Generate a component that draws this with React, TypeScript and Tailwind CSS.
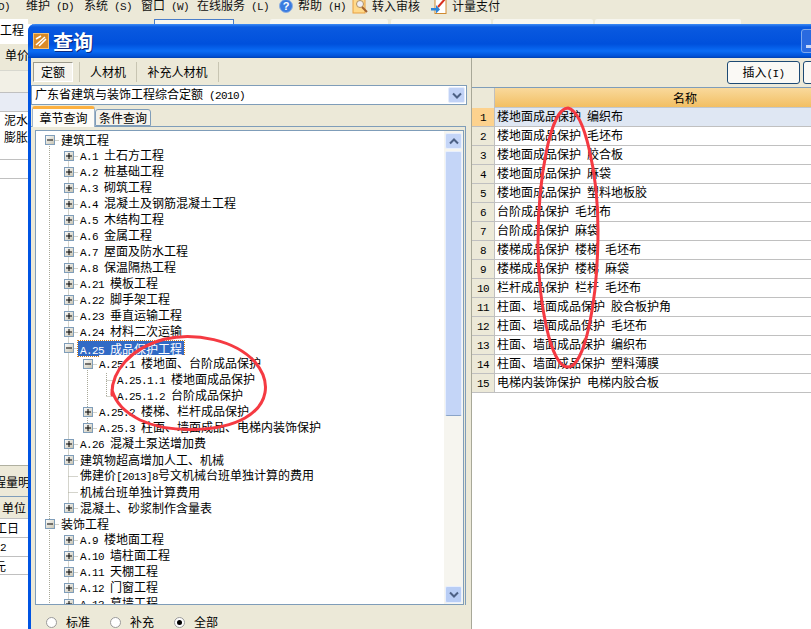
import React from "react";

const cjk = "font-['Noto_Sans_CJK_SC','Noto_Sans_CJK_JP',sans-serif]";

function T({ children, className = "" }: { children: string; className?: string }) {
  const parts = children.split(/([\x20-\x7e]+)/).filter(Boolean);
  return (
    <span className={`whitespace-pre ${className}`}>
      {parts.map((p, i) =>
        /^[\x20-\x7e]+$/.test(p) ? (
          <span key={i} className="font-['Liberation_Mono',monospace] text-[11px] tracking-[-0.6px]">{p}</span>
        ) : (
          <span key={i}>{p}</span>
        )
      )}
    </span>
  );
}

function Box({ open }: { open?: boolean }) {
  return (
    <svg width="10" height="10" viewBox="0 0 10 10" className="block shrink-0">
      <defs>
        <linearGradient id="bx" x1="0" y1="0" x2="1" y2="1">
          <stop offset="0" stopColor="#ffffff" />
          <stop offset="1" stopColor="#c4c0ae" />
        </linearGradient>
      </defs>
      <rect x="0.5" y="0.5" width="9" height="9" fill="url(#bx)" stroke="#7f9db9" />
      <path d={open ? "M2 5h6" : "M2 5h6M5 2v6"} stroke="#000" strokeWidth="1" />
    </svg>
  );
}

type Row = { t: string; l: number; s?: "p" | "m"; sel?: boolean };
const tree: Row[] = [
  { t: "建筑工程", l: 0, s: "m" },
  { t: "A.1 土石方工程", l: 1, s: "p" },
  { t: "A.2 桩基础工程", l: 1, s: "p" },
  { t: "A.3 砌筑工程", l: 1, s: "p" },
  { t: "A.4 混凝土及钢筋混凝土工程", l: 1, s: "p" },
  { t: "A.5 木结构工程", l: 1, s: "p" },
  { t: "A.6 金属工程", l: 1, s: "p" },
  { t: "A.7 屋面及防水工程", l: 1, s: "p" },
  { t: "A.8 保温隔热工程", l: 1, s: "p" },
  { t: "A.21 模板工程", l: 1, s: "p" },
  { t: "A.22 脚手架工程", l: 1, s: "p" },
  { t: "A.23 垂直运输工程", l: 1, s: "p" },
  { t: "A.24 材料二次运输", l: 1, s: "p" },
  { t: "A.25 成品保护工程", l: 1, s: "m", sel: true },
  { t: "A.25.1 楼地面、台阶成品保护", l: 2, s: "m" },
  { t: "A.25.1.1 楼地面成品保护", l: 3 },
  { t: "A.25.1.2 台阶成品保护", l: 3 },
  { t: "A.25.2 楼梯、栏杆成品保护", l: 2, s: "p" },
  { t: "A.25.3 柱面、墙面成品、电梯内装饰保护", l: 2, s: "p" },
  { t: "A.26 混凝土泵送增加费", l: 1, s: "p" },
  { t: "建筑物超高增加人工、机械", l: 1, s: "p" },
  { t: "佛建价[2013]8号文机械台班单独计算的费用", l: 1 },
  { t: "机械台班单独计算费用", l: 1 },
  { t: "混凝土、砂浆制作含量表", l: 1, s: "p" },
  { t: "装饰工程", l: 0, s: "m" },
  { t: "A.9 楼地面工程", l: 1, s: "p" },
  { t: "A.10 墙柱面工程", l: 1, s: "p" },
  { t: "A.11 天棚工程", l: 1, s: "p" },
  { t: "A.12 门窗工程", l: 1, s: "p" },
  { t: "A.13 幕墙工程", l: 1, s: "p" },
];

const rows = [
  "楼地面成品保护 编织布",
  "楼地面成品保护 毛坯布",
  "楼地面成品保护 胶合板",
  "楼地面成品保护 麻袋",
  "楼地面成品保护 塑料地板胶",
  "台阶成品保护 毛坯布",
  "台阶成品保护 麻袋",
  "楼梯成品保护 楼梯 毛坯布",
  "楼梯成品保护 楼梯 麻袋",
  "栏杆成品保护 栏杆 毛坯布",
  "柱面、墙面成品保护 胶合板护角",
  "柱面、墙面成品保护 毛坯布",
  "柱面、墙面成品保护 编织布",
  "柱面、墙面成品保护 塑料薄膜",
  "电梯内装饰保护 电梯内胶合板",
];

const padBox = ["pl-[9px]", "pl-[28px]", "pl-[47px]", "pl-[47px]"];
const padText = ["pl-[24px]", "pl-[44px]", "pl-[63px]", "pl-[81px]"];

const cy = (i: number) => 9 + 16 * i + 0.5;
const guideLines = tree
  .map((r, i) => {
    const from = [13.5, 32.5, 51.5, 70.5][r.l];
    const to = [23, 42, 61, 80][r.l];
    return `M${from} ${cy(i)}H${to}`;
  })
  .join("");

function Radio({ on, label }: { on?: boolean; label: string }) {
  return (
    <div className="flex items-center gap-[9px]">
      <span className="w-[11px] h-[11px] rounded-full border border-[#9a9a9a] bg-white flex items-center justify-center">
        {on && <span className="w-[5px] h-[5px] rounded-full bg-black" />}
      </span>
      <span>{label}</span>
    </div>
  );
}

function Chev({ up }: { up?: boolean }) {
  return (
    <svg width="10" height="7" viewBox="0 0 10 7">
      <path d={up ? "M1 5.5L5 1.5L9 5.5" : "M1 1.5L5 5.5L9 1.5"} fill="none" stroke="#4d6185" strokeWidth="2" />
    </svg>
  );
}

export default function App() {
  return (
    <div className={`relative w-[811px] h-[629px] overflow-hidden bg-white text-[12px] leading-[16px] text-black ${cjk}`}>
      {/* menu bar */}
      <div className="h-[19px] bg-[#ece9d8] text-[#111] pb-[8px]">
        <div className="h-[11px] flex items-center">
          <T className="ml-[-2px] w-[28px]">{"D)"}</T>
          <T className="w-[58px]">{"维护 (D)"}</T>
          <T className="w-[57px]">{"系统 (S)"}</T>
          <T className="w-[56px]">{"窗口 (W)"}</T>
          <T className="w-[82px]">{"在线服务 (L)"}</T>
          <svg width="14" height="14" viewBox="0 0 14 14" className="mr-[5px]">
            <circle cx="7" cy="7" r="6.5" fill="#3a7be0" stroke="#8fb0e0" />
            <text x="7" y="11" textAnchor="middle" fontSize="11" fontWeight="700" fill="#fff" fontFamily="Liberation Sans">?</text>
          </svg>
          <T className="w-[54px]">{"帮助 (H)"}</T>
          <svg width="16" height="16" viewBox="0 0 16 16" className="mr-[4px]">
            <rect x="1" y="0" width="12" height="15" fill="#ffd98a" stroke="#e8a040" />
            <circle cx="8" cy="6" r="3.5" fill="#eeeef4" stroke="#b09060" />
            <path d="M10 9l5 5" stroke="#a06030" strokeWidth="2" />
          </svg>
          <T className="w-[59px]">转入审核</T>
          <svg width="17" height="16" viewBox="0 0 17 16" className="mr-[4px]">
            <rect x="4" y="0.5" width="11" height="15" fill="#fff" stroke="#d08a30" />
            <path d="M7 9l7-8" stroke="#d83020" strokeWidth="2" />
            <path d="M0 10h5V7l4 4.5-4 4v-3H0z" fill="#2f86d8" />
          </svg>
          <T>计量支付</T>
        </div>
      </div>
      {/* background tab strip */}
      <div className="h-[5px] bg-[#ece9d8] flex items-end">
        <div className="w-[28px] h-[5px] bg-white" />
        <div className="ml-[126px] w-[80px] h-[5px] bg-[#f7f6ef] border border-b-0 border-[#4a7dc8]" />
        <div className="ml-[36px] w-[118px] h-[5px] bg-[#f7f6ef] rounded-t-[2px]" />
        <div className="ml-[3px] w-[100px] h-[5px] bg-[#f7f6ef] rounded-t-[2px]" />
        <div className="ml-[2px] w-[100px] h-[5px] bg-[#f7f6ef] rounded-t-[2px]" />
        <div className="ml-[2px] w-[146px] h-[5px] bg-[#f7f6ef] rounded-t-[2px]" />
      </div>
      {/* background window, left part */}
      <div className="w-[28px] flex flex-col -mt-[5px]">
        <div className="h-[25px] bg-white pt-[3px] overflow-hidden"><T className="block">工程</T></div>
        <div className="h-[26px] bg-[#ece9d8] flex items-center pl-[5px] pb-[4px] overflow-hidden"><T>单价</T></div>
        <div className="h-[22px] bg-[#f2f0e6] border-t border-[#d8d8d0]" />
        <div className="h-[19px] bg-[#e8ecf5] border-t border-[#c0c0c0]" />
        <div className="h-[17px] bg-white border-t border-[#c0c0c0] flex items-center justify-end"><T>泥水</T></div>
        <div className="h-[31px] bg-white flex items-start justify-end pt-[1px]"><T>膨胀</T></div>
        <div className="h-[19px] bg-white border-t border-[#c0c0c0]" />
        <div className="h-[287px] bg-white border-t border-[#c0c0c0]" />
        <div className="h-[31px] bg-[#ece9d8] border-t border-[#b0b0a0] overflow-hidden pt-[8px]"><T className="ml-[-6px] block">程量明</T></div>
        <div className="h-[22px] bg-[#ece9d8] border-t border-[#7f9db9] flex items-center pl-[2px]"><T>单位</T></div>
        <div className="h-[19px] bg-white border-t border-[#c0c0c0] flex items-center overflow-hidden"><T className="ml-[-5px]">工日</T></div>
        <div className="h-[19px] bg-white border-t border-[#c0c0c0] flex items-center"><T>2</T></div>
        <div className="h-[18px] bg-white border-t border-[#c0c0c0] flex items-center overflow-hidden"><T className="ml-[-6px]">元</T></div>
        <div className="h-[20px] bg-white border-t border-[#c0c0c0]" />
      </div>

      {/* dialog window */}
      <div className="absolute left-[28px] top-[24px] w-[800px] h-[620px] flex flex-col bg-[#ece9d8] border-x-[3px] border-[#0054e3] rounded-tl-[7px]">
        <div className="h-[34px] -mx-[3px] shrink-0 flex items-center pl-[5px] gap-[4px] rounded-tl-[7px] bg-[linear-gradient(to_bottom,#3d8cf5_0px,#0a5ae0_3px,#0050dc_20px,#0a6cf5_27px,#0052d8_32px,#0040b0_34px)]">
          <svg width="16" height="16" viewBox="0 0 16 16" className="shrink-0">
            <rect x="0.5" y="0.5" width="15" height="15" fill="#d98a28" stroke="#f5c070" />
            <path d="M3 12L12 4M6 13l7-7M3 6l5-3" stroke="#fff" strokeWidth="1.6" />
          </svg>
          <span className="text-white font-bold text-[20px] leading-[24px] mt-[1px] [text-shadow:1px_1px_0_#0a2a80]">查询</span>
          <div className="ml-auto w-[27px] h-[24px] rounded-[3px] border border-[#7fa8ec] bg-[#2a6ae0]">
            <span className="block w-[10px] h-[3px] bg-[#c8d8f8] mt-[15px] ml-[4px]" />
          </div>
        </div>
        <div className="flex-1 flex min-h-0">
          {/* left pane */}
          <div className="w-[436px] shrink-0 flex flex-col">
            <div className="h-[27px] shrink-0 flex items-center pl-[2px]">
              <div className="w-[40px] h-[20px] flex items-center justify-center bg-[#f5f3ec] border border-[#9c9a8c] border-b-white border-r-white">定额</div>
              <span className="ml-[6px] w-[58px] h-[20px] flex items-center justify-center border-x border-[#c8c5b2] pr-[10px] pl-[10px]">人材机</span>
              <span className="w-[82px] h-[20px] flex items-center justify-center border-r border-[#c8c5b2]">补充人材机</span>
            </div>
            <div className="h-[20px] shrink-0 bg-white border border-[#7f9db9] flex items-center pl-[3px] pr-[1px]">
              <T className="flex-1 -mt-[1px]">广东省建筑与装饰工程综合定额 (2010)</T>
              <span className="w-[17px] h-[16px] bg-[#c1d2f6] border border-[#e4ecfc] rounded-[2px] flex items-center justify-center"><Chev /></span>
            </div>
            <div className="h-[21px] shrink-0 flex items-end pl-[1px]">
              <div className="relative z-10 w-[63px] h-[21px] bg-[#fdfcf8] border border-b-0 border-[#a0b4c8] border-t-[3px] border-t-[#fcb040] rounded-t-[3px] flex items-center justify-center -mb-[1px]">章节查询</div>
              <div className="w-[56px] h-[17px] bg-[#f5f3ec] border border-[#7f9db9] rounded-t-[3px] flex items-center justify-center">条件查询</div>
            </div>
            <div className="h-[479px] shrink-0 w-[435px] border-t border-r border-[#7f9db9] bg-[#ece9d8] pt-[3px] pl-[4px] pr-[1px]">
              <div className="h-full bg-white border border-[#7f9db9] flex overflow-hidden relative">
                <div className="flex-1 min-w-0 pt-[1px] overflow-hidden relative">
                  <svg className="absolute left-0 top-0 pointer-events-none" width="410" height="480">
                    <g stroke="#a8a898" strokeDasharray="1 1" fill="none">
                      <path d={`M13.5 9V480M32.5 25.5V377.5M32.5 409.5V480M51.5 233V297M70.5 238V265.5`} />
                      <path d={guideLines} />
                    </g>
                  </svg>
                  {tree.map((r, i) => (
                    <div key={i} className={`relative h-[16px] flex items-center ${r.s ? padBox[r.l] : padText[r.l]}`}>
                      {r.s && <span className="mr-[6px]"><Box open={r.s === "m"} /></span>}
                      <T className={r.sel ? "inline-block h-[15px] leading-[15px] bg-[#316ac5] text-white outline-1 outline-dotted outline-[#d08020] px-[2px] ml-[-2px]" : "bg-white"}>{r.t}</T>
                    </div>
                  ))}
                </div>
                <div className="w-[19px] shrink-0 bg-[#f6f5ef] flex flex-col px-[1px] pt-[2px] pb-[1px]">
                  <span className="h-[16px] bg-[#c4d5f7] border border-[#e8effd] rounded-[2px] flex items-center justify-center"><Chev up /></span>
                  <span className="h-[265px] mt-[2px] bg-[#c4d5f7] border border-[#e8effd] border-b-[#8aa4c8] rounded-[2px]" />
                  <span className="flex-1" />
                  <span className="h-[17px] bg-[#b8cdf5] border border-[#e8effd] rounded-[2px] flex items-center justify-center"><Chev /></span>
                </div>
              </div>
            </div>
            <div className="flex-1 flex items-start gap-[20px] pl-[15px] pt-[9px]">
              <Radio label="标准" />
              <Radio label="补充" />
              <Radio on label="全部" />
            </div>
          </div>
          {/* splitter */}
          <div className="w-[5px] shrink-0 border-r border-[#a8a898]" />
          {/* right pane */}
          <div className="flex-1 min-w-0 flex flex-col">
            <div className="h-[29px] shrink-0 flex items-start pt-[3px] pl-[255px] gap-[3px]">
              <span className="w-[73px] h-[23px] shrink-0 flex items-center justify-center bg-[#faf9f5] border border-[#1d4a74] rounded-[3px]">
                <T>插入(I)</T>
              </span>
              <span className="w-[30px] h-[23px] shrink-0 bg-[#faf9f5] border border-[#1d4a74] rounded-[3px]" />
            </div>
            <div className="flex-1 bg-white flex flex-col border-t border-[#7f9db9]">
              <div className="h-[20px] shrink-0 flex">
                <div className="w-[23px] bg-[#ece9d8] border-r border-[#c0c0c0]" />
                <div className="flex-1 flex items-center bg-[linear-gradient(to_bottom,#f9d99c,#f2bf63)] border-b border-[#c0c8d0] pl-[178px]">名称</div>
              </div>
              {rows.map((r, i) => (
                <div key={i} className={`h-[19px] shrink-0 flex border-b border-[#c0c0c0] ${i === 0 ? "bg-[#dfe7f3]" : "bg-white"}`}>
                  <div className={`w-[23px] flex items-center justify-center border-r border-[#c0c0c0] ${i === 0 ? "bg-[#fdd28e]" : "bg-[#ece9d8]"}`}><T>{String(i + 1)}</T></div>
                  <div className="flex-1 pl-[2px] flex items-center"><T>{r}</T></div>
                </div>
              ))}
            </div>
          </div>
        </div>
      </div>

      {/* hand-drawn red marks */}
      <svg className="absolute left-0 top-0 pointer-events-none" width="811" height="629" fill="none" stroke="#f53a42" strokeWidth="3" strokeLinecap="round">
        <path d="M112 395C111 372 130 348 165 339C195 332 235 340 255 362C272 382 268 405 245 418C220 432 170 434 140 420C125 412 116 404 112 390" />
        <path d="M568 108C585 112 598 175 598 230C598 300 585 367 568 367C550 367 538 300 538 243C538 180 550 108 568 108" />
      </svg>
    </div>
  );
}
